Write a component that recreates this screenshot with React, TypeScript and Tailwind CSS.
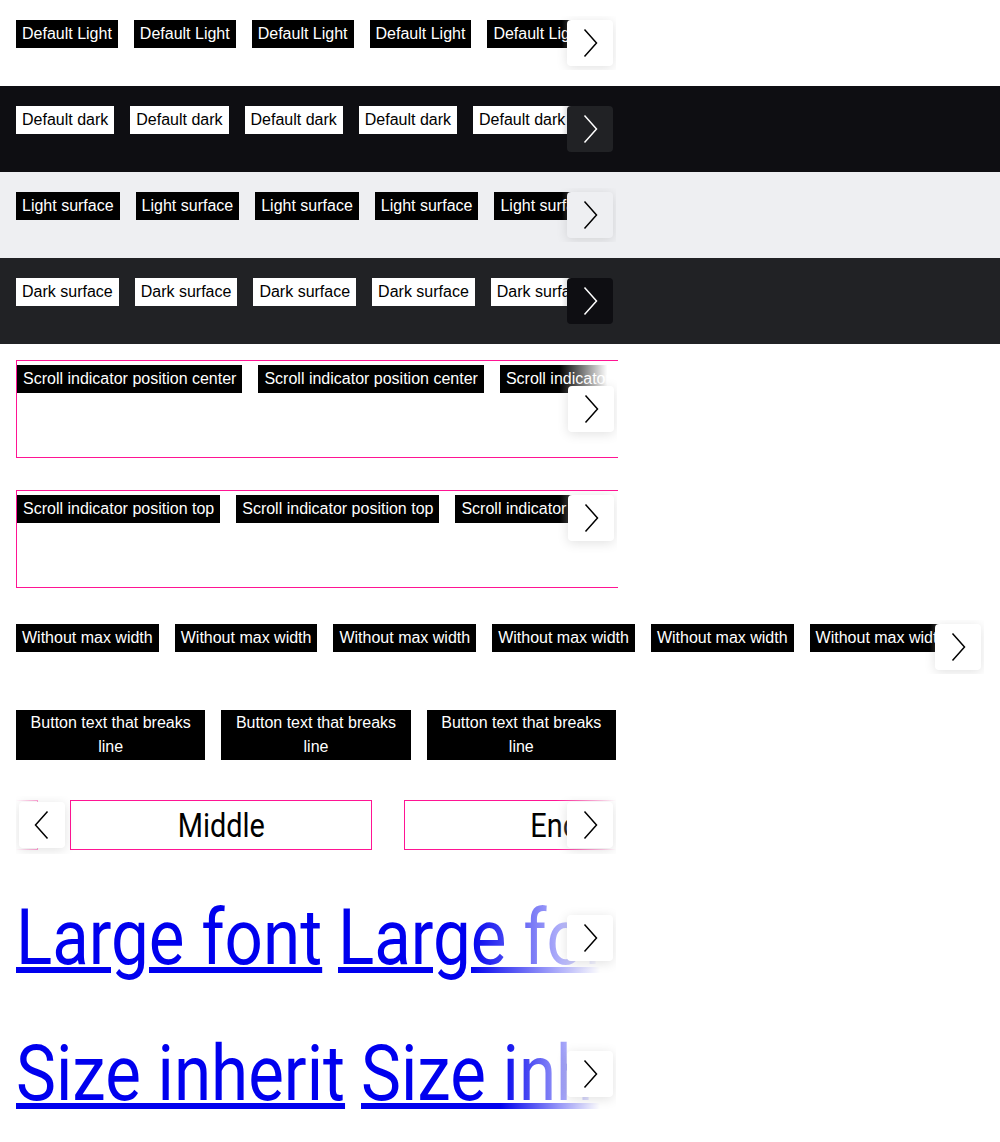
import React from 'react';

const Chevron = ({ dir = 'right', color = '#000' }: { dir?: 'right' | 'left'; color?: string }) => (
  <svg width="46" height="46" viewBox="0 0 46 46" fill="none">
    <polyline
      points={dir === 'right' ? '17.5,9.5 29.5,23 17.5,36.5' : '28.5,9.5 16.5,23 28.5,36.5'}
      stroke={color}
      strokeWidth="1.5"
      strokeLinejoin="miter"
    />
  </svg>
);

type ScrollerProps = {
  children: React.ReactNode;
  className?: string;
  contentClass?: string;
  fade?: string;
  fadeLeft?: string;
  btnBg?: string;
  chevron?: string;
  position?: 'center' | 'top';
  next?: boolean;
  prev?: boolean;
};

function Scroller({
  children,
  className = 'w-[600px]',
  contentClass = 'gap-4',
  fade,
  fadeLeft,
  btnBg = 'bg-white shadow-[0_2px_12px_rgba(0,0,0,0.12)]',
  chevron = '#000',
  position = 'center',
  next = true,
  prev = false,
}: ScrollerProps) {
  const pos = position === 'center' ? 'top-1/2 -translate-y-1/2' : 'top-1';
  return (
    <div className={`relative overflow-hidden py-1 ${className}`}>
      <div className={`flex min-h-[46px] items-start whitespace-nowrap ${contentClass}`}>{children}</div>
      {fade && <div className={`pointer-events-none absolute inset-y-0 right-0 ${fade}`} />}
      {fadeLeft && <div className={`pointer-events-none absolute inset-y-0 left-0 ${fadeLeft}`} />}
      {next && (
        <div className={`absolute right-[3px] flex h-[46px] w-[46px] items-center justify-center rounded-[4px] ${pos} ${btnBg}`}>
          <Chevron dir="right" color={chevron} />
        </div>
      )}
      {prev && (
        <div className={`absolute left-[3px] flex h-[46px] w-[46px] items-center justify-center rounded-[4px] ${pos} ${btnBg}`}>
          <Chevron dir="left" color={chevron} />
        </div>
      )}
    </div>
  );
}

const LightTag = ({ children }: { children: React.ReactNode }) => (
  <span className="shrink-0 bg-black px-[6px] py-[2px] text-[16px] leading-6 text-white">{children}</span>
);
const DarkTag = ({ children }: { children: React.ReactNode }) => (
  <span className="shrink-0 bg-white px-[6px] py-[2px] text-[16px] leading-6 text-black">{children}</span>
);

const eight = [0, 1, 2, 3, 4, 5, 6, 7];

const BigLink = ({ text, width }: { text: string; width: string }) => (
  <a href="#" className={`block shrink-0 text-[#0000ee] ${width}`}>
    <span className="block origin-left scale-x-[0.874] whitespace-nowrap font-['Roboto',sans-serif] text-[77px] leading-[96px] underline decoration-[6px] underline-offset-[3px]">
      {text}
    </span>
  </a>
);

export default function App() {
  return (
    <div className="w-full font-['Liberation_Sans',Arial,sans-serif] text-black">
      <div className="bg-white p-4">
        <Scroller fade="w-[64px] bg-[linear-gradient(to_right,rgba(255,255,255,0)_15%,#ffffff_85%)]">
          {eight.map((i) => (
            <LightTag key={i}>Default Light</LightTag>
          ))}
        </Scroller>
      </div>
      <div className="bg-[#0e0e12] p-4">
        <Scroller
          fade="w-[64px] bg-[linear-gradient(to_right,rgba(14,14,18,0)_15%,#0e0e12_85%)]"
          btnBg="bg-[#212225]"
          chevron="#fff"
        >
          {eight.map((i) => (
            <DarkTag key={i}>Default dark</DarkTag>
          ))}
        </Scroller>
      </div>
      <div className="bg-[#eeeff2] p-4">
        <Scroller
          fade="w-[64px] bg-[linear-gradient(to_right,rgba(238,239,242,0)_15%,#eeeff2_85%)]"
          btnBg="bg-[#eeeff2] shadow-[0_2px_12px_rgba(0,0,0,0.12)]"
        >
          {eight.map((i) => (
            <LightTag key={i}>Light surface</LightTag>
          ))}
        </Scroller>
      </div>
      <div className="bg-[#212225] p-4">
        <Scroller
          fade="w-[64px] bg-[linear-gradient(to_right,rgba(33,34,37,0)_15%,#212225_85%)]"
          btnBg="bg-[#0e0e12]"
          chevron="#fff"
        >
          {eight.map((i) => (
            <DarkTag key={i}>Dark surface</DarkTag>
          ))}
        </Scroller>
      </div>

      <div className="p-4">
        <div className="h-[98px] w-[602px] border-y border-l border-[#ff1493]">
          <Scroller
            className="h-full w-[600px]"
            fade="w-[64px] bg-[linear-gradient(to_right,rgba(255,255,255,0)_10%,#ffffff_85%)]"
          >
            {[0, 1, 2, 3].map((i) => (
              <LightTag key={i}>Scroll indicator position center</LightTag>
            ))}
          </Scroller>
        </div>
      </div>
      <div className="p-4">
        <div className="h-[98px] w-[602px] border-y border-l border-[#ff1493]">
          <Scroller
            className="h-full w-[600px]"
            position="top"
            fade="w-[64px] bg-[linear-gradient(to_right,rgba(255,255,255,0)_10%,#ffffff_85%)]"
          >
            {[0, 1, 2, 3].map((i) => (
              <LightTag key={i}>Scroll indicator position top</LightTag>
            ))}
          </Scroller>
        </div>
      </div>

      <div className="p-4">
        <Scroller
          className="w-full"
          fade="w-[64px] bg-[linear-gradient(to_right,rgba(255,255,255,0)_15%,#ffffff_85%)]"
        >
          {eight.map((i) => (
            <LightTag key={i}>Without max width</LightTag>
          ))}
        </Scroller>
      </div>

      <div className="p-4">
        <Scroller next={false}>
          {[0, 1, 2].map((i) => (
            <span
              key={i}
              className="min-w-0 flex-1 whitespace-normal bg-black px-[6px] py-px text-center text-[16px] leading-6 text-white"
            >
              Button text that breaks line
            </span>
          ))}
        </Scroller>
      </div>

      <div className="p-4">
        <Scroller
          prev
          contentClass="gap-8"
          fade="w-[60px] bg-[linear-gradient(to_right,rgba(255,255,255,0)_0%,#ffffff_100%)]"
          fadeLeft="w-[54px] bg-[linear-gradient(to_right,#ffffff_0%,rgba(255,255,255,0)_100%)]"
        >
          <div className="ml-[-280px] flex shrink-0 gap-8">
            {['Start', 'Middle', 'End'].map((t) => (
              <div
                key={t}
                className="h-[50px] w-[302px] shrink-0 border border-[#ff1493] text-center font-['Roboto',sans-serif] text-[34px] leading-[48px]"
              >
                <span className="inline-block origin-center scale-x-[0.85]">{t}</span>
              </div>
            ))}
          </div>
        </Scroller>
      </div>

      <div className="p-4">
        <Scroller fade="w-[146px] bg-[linear-gradient(to_right,rgba(255,255,255,0)_0%,#ffffff_89%)]">
          {[0, 1, 2].map((i) => (
            <BigLink key={i} text="Large font" width="w-[306px]" />
          ))}
        </Scroller>
      </div>

      <div className="p-4">
        <Scroller fade="w-[116px] bg-[linear-gradient(to_right,rgba(255,255,255,0)_0%,#ffffff_86%)]">
          {[0, 1, 2].map((i) => (
            <BigLink key={i} text="Size inherit" width="w-[329px]" />
          ))}
        </Scroller>
      </div>
    </div>
  );
}
